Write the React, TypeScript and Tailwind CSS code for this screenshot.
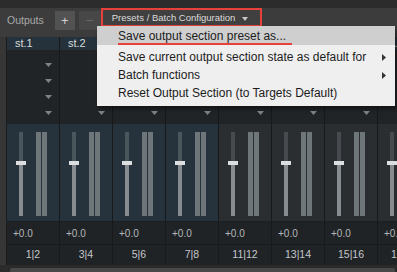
const columns = [
  { name: 'st.1', label: '1|2', blue: true },
  { name: 'st.2', label: '3|4', blue: true },
  { name: 'st.3', label: '5|6', blue: true },
  { name: 'st.4', label: '7|8', blue: true },
  { name: 'st.5', label: '11|12', blue: false },
  { name: 'st.6', label: '13|14', blue: false },
  { name: 'st.7', label: '15|16', blue: false },
  { name: 'st.8', label: '17|18', blue: false },
];

function DropTriangle() {
  return (
    <svg width="7" height="4" viewBox="0 0 7 4" className="block">
      <path d="M0 0H7L3.5 4Z" fill="#7d8488" />
    </svg>
  );
}

function Channel({ name, label, blue }: { name: string; label: string; blue: boolean }) {
  return (
    <div className="flex w-[53px] shrink-0 flex-col border-r border-[#17191b]">
      <div className="flex h-[13px] items-center bg-[#26323b] pl-[8px] text-[11px] leading-none text-[#d6dadc]">
        {name}
      </div>
      <div className="flex h-[74px] flex-col items-end gap-[12px] bg-[#212427] pr-[7px] pt-[13px]">
        <DropTriangle />
        <DropTriangle />
        <DropTriangle />
        <DropTriangle />
      </div>
      <div
        className={`flex h-[98px] gap-[6px] border-b border-[#1c1f21] pl-[9px] pt-[8px] ${
          blue ? 'bg-[#27333c]' : 'bg-[#2b2e31]'
        }`}
      >
        <div className="flex w-[10px] flex-col items-center">
          <div className={`h-[29px] w-[4px] ${blue ? 'bg-[#4a555c]' : 'bg-[#474b4f]'}`} />
          <div className="h-[4px] w-[10px] bg-[#dcdedf]" />
          <div className="h-[51px] w-[4px] bg-[#868c90]" />
        </div>
        <div className="ml-[4px] flex h-[84px] gap-[1px]">
          <div className="w-[5px] bg-[#6e7679]" />
          <div className="w-[5px] bg-[#6e7679]" />
        </div>
      </div>
      <div className="flex h-[22px] items-center bg-[#202326] pl-[6px] text-[10px] text-[#b4b8ba]">
        +0.0
      </div>
      <div className="flex h-[21px] items-center justify-center border-t border-[#17191b] bg-[#202326] text-[10.5px] text-[#c4c8ca]">
        {label}
      </div>
    </div>
  );
}

export default function App() {
  return (
    <div className="relative h-[272px] w-[397px] overflow-hidden bg-[#2b2b2b] font-['Liberation_Sans',Arial,sans-serif]">
      <div className="h-[8px] bg-[#2c2c2c]" />
      <div className="flex h-[29px] items-start bg-[#3c3c3c]">
        <span className="ml-[7px] mt-[5px] text-[10.5px] text-[#a8a8a8]">Outputs</span>
        <button className="ml-[11px] mt-[3px] flex h-[19px] w-[20px] items-center justify-center bg-[#525252] text-[13px] leading-none text-[#d0d0d0]">
          +
        </button>
        <button className="ml-[4px] mt-[3px] flex h-[19px] w-[22px] items-center justify-center bg-[#474747] text-[13px] leading-none text-[#6a6a6a]">
          −
        </button>
        <button className="flex h-[19px] w-[161px] items-center border-2 border-[#e8413c] bg-[#404040] pl-[9px] text-[9.5px] leading-none text-[#dcdcdc]">
          Presets / Batch Configuration
          <svg width="6" height="4" viewBox="0 0 6 4" className="ml-[7px] mt-[2px]">
            <path d="M0 0H6L3 4Z" fill="#c8c8c8" />
          </svg>
        </button>
      </div>

      <div className="flex">
        <div className="w-[7px] shrink-0 border-r border-[#1c1c1c] bg-[#363636]" />
        {columns.map((c) => (
          <Channel key={c.name} {...c} />
        ))}
      </div>

      <div className="flex h-[7px] items-end bg-[#2b2b2b] pl-[10px]">
        <div className="h-[4px] w-[385px] rounded-t-[2px] bg-[#484848]" />
      </div>

      {/* popup menu */}
      <div className="absolute left-[97px] top-[26px] w-[298px] bg-[#efefef] pb-[4px] text-[12px] leading-none text-[#1c1c1c] shadow-[2px_3px_4px_rgba(0,0,0,0.45)]">
        <div className="flex h-[19px] items-center bg-[#cfcfcf] pl-[21px]">
          <span className="border-b-2 border-[#e8413c] pb-[1px] pr-[6px] pt-[3px]">Save output section preset as...</span>
        </div>
        <div className="mt-[3px] flex h-[18px] items-center justify-between pl-[21px] pr-[9px]">
          <span>Save current output section state as default for</span>
          <svg width="4" height="7" viewBox="0 0 4 7">
            <path d="M0 0L4 3.5L0 7Z" fill="#333" />
          </svg>
        </div>
        <div className="flex h-[18px] items-center justify-between pl-[21px] pr-[9px]">
          <span>Batch functions</span>
          <svg width="4" height="7" viewBox="0 0 4 7">
            <path d="M0 0L4 3.5L0 7Z" fill="#333" />
          </svg>
        </div>
        <div className="flex h-[18px] items-center pl-[21px]">
          <span>Reset Output Section (to Targets Default)</span>
        </div>
      </div>
    </div>
  );
}
